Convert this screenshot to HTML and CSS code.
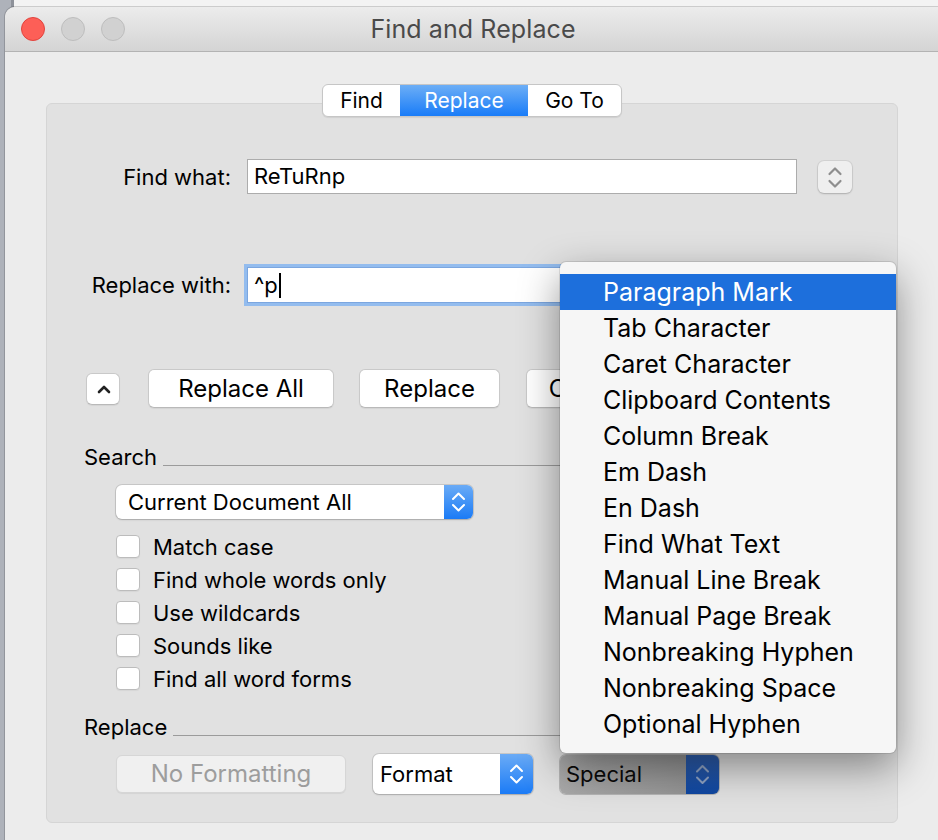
FILE: index.html
```html
<!DOCTYPE html>
<html>
<head>
<meta charset="utf-8">
<title>Find and Replace</title>
<link rel="stylesheet" href="styles.css">
</head>
<body>
<div class="window">
  <div class="titlebar">
    <div class="lights"><span class="light red"></span><span class="light"></span><span class="light"></span></div>
    <div class="title">Find and Replace</div>
    <div></div>
  </div>
  <div class="content">
    <div class="tabs">
      <div class="seg">
        <div class="tab t-find">Find</div>
        <div class="tab t-replace active">Replace</div>
        <div class="tab t-goto">Go To</div>
      </div>
    </div>
    <div class="group">
      <div class="row find-row">
        <div class="lbl">Find what:</div>
        <div class="input">ReTuRnp</div>
        <div class="stepper">
          <svg width="34" height="32" viewBox="0 0 34 32"><path d="M11.5 13 L17 7.5 L22.5 13 M11.5 20 L17 25.5 L22.5 20" fill="none" stroke="#8e8e8e" stroke-width="2.2" stroke-linecap="round" stroke-linejoin="round"/></svg>
        </div>
      </div>
      <div class="row replace-row">
        <div class="lbl">Replace with:</div>
        <div class="input focus">^p<span class="caret"></span></div>
        <div class="stepper">
          <svg width="34" height="32" viewBox="0 0 34 32"><path d="M11.5 13 L17 7.5 L22.5 13 M11.5 20 L17 25.5 L22.5 20" fill="none" stroke="#8e8e8e" stroke-width="2.2" stroke-linecap="round" stroke-linejoin="round"/></svg>
        </div>
      </div>
      <div class="row btn-row">
        <div class="btn btn-sq">
          <svg width="34" height="32" viewBox="0 0 34 32"><path d="M12 18 L17 13 L22 18" fill="none" stroke="#222" stroke-width="2.6" stroke-linecap="round" stroke-linejoin="round"/></svg>
        </div>
        <div class="btn btn-all">Replace All</div>
        <div class="btn btn-rep">Replace</div>
        <div class="btn btn-next">Cancel</div>
      </div>
      <div class="section-head search-head"><span>Search</span><div class="rule"></div></div>
      <div class="popup popup-doc">
        <span class="ptext">Current Document All</span>
        <div class="parrows">
          <svg width="29" height="34" viewBox="0 0 29 34"><path d="M9 14 L14.5 8.5 L20 14 M9 20 L14.5 25.5 L20 20" fill="none" stroke="#fff" stroke-width="2" stroke-linecap="round" stroke-linejoin="round"/></svg>
        </div>
      </div>
      <ul class="checks">
        <li><span class="cb"></span>Match case</li>
        <li><span class="cb"></span>Find whole words only</li>
        <li><span class="cb"></span>Use wildcards</li>
        <li><span class="cb"></span>Sounds like</li>
        <li><span class="cb"></span>Find all word forms</li>
      </ul>
      <div class="section-head replace-head"><span>Replace</span><div class="rule"></div></div>
      <div class="row bottom-row">
        <div class="btn btn-nofmt">No Formatting</div>
        <div class="popup popup-format">
          <span class="ptext">Format</span>
          <div class="parrows">
            <svg width="33" height="40" viewBox="0 0 33 40"><path d="M11 17 L16.5 11.5 L22 17 M11 23 L16.5 28.5 L22 23" fill="none" stroke="#fff" stroke-width="2" stroke-linecap="round" stroke-linejoin="round"/></svg>
          </div>
        </div>
        <div class="popup popup-special">
          <span class="ptext">Special</span>
          <div class="parrows">
            <svg width="33" height="39" viewBox="0 0 33 39"><path d="M11 16.5 L16.5 11 L22 16.5 M11 22.5 L16.5 28 L22 22.5" fill="none" stroke="#8fa3c4" stroke-width="2" stroke-linecap="round" stroke-linejoin="round"/></svg>
          </div>
        </div>
      </div>
    </div>
  </div>
  <ul class="menu">
    <li class="hl">Paragraph Mark</li>
    <li>Tab Character</li>
    <li>Caret Character</li>
    <li>Clipboard Contents</li>
    <li>Column Break</li>
    <li>Em Dash</li>
    <li>En Dash</li>
    <li>Find What Text</li>
    <li>Manual Line Break</li>
    <li>Manual Page Break</li>
    <li>Nonbreaking Hyphen</li>
    <li>Nonbreaking Space</li>
    <li>Optional Hyphen</li>
  </ul>
</div>
</body>
</html>
```

FILE: styles.css
```css
* { box-sizing: border-box; margin: 0; padding: 0; }
html, body { width: 938px; height: 840px; overflow: hidden; }
body {
  background: linear-gradient(to right, #aeb2ba 0 11px, #8e929a 11px 14px, #f3f3f3 14px);
  font-family: Inter, "Noto Sans", sans-serif;
  color: #000;
}
.window {
  position: relative;
  margin: 7px 0 0 5px;
  width: 940px;
  height: 840px;
  background: #ececec;
  border-radius: 10px 0 0 0;
  box-shadow: 0 0 0 1px rgba(0,0,0,0.16);
  overflow: hidden;
}
.titlebar {
  height: 45px;
  display: grid;
  grid-template-columns: 1fr auto 1fr;
  align-items: center;
  background: linear-gradient(#ececec, #d4d4d4);
  border-bottom: 1px solid #b3b3b3;
}
.lights { display: flex; gap: 16px; padding-left: 16px; }
.light {
  width: 24px; height: 24px; border-radius: 50%;
  background: #d1d1d1; border: 1px solid #bdbdbd;
}
.light.red { background: #fd5f57; border-color: #e0443e; }
.title { font-size: 25px; color: #4a4a4a; letter-spacing: 0.1px; margin-right: 4px; }

.content { padding: 32px 0 0 41px; width: 933px; }
.tabs { display: flex; justify-content: center; position: relative; z-index: 1; width: 852px; }
.seg {
  display: flex; height: 33px;
  background: #fff; border: 1px solid #c6c6c6; border-radius: 6px;
  box-shadow: 0 1px 1px rgba(0,0,0,0.08);
  overflow: hidden;
}
.tab { font-size: 21px; line-height: 32px; text-align: center; color: #000; }
.t-find { width: 77px; }
.t-replace { width: 128px; }
.t-goto { width: 93px; }
.tab.active { background: linear-gradient(#6caef6, #197cf8); color: #fff; }

.group {
  margin-top: -14px;
  width: 852px; height: 720px;
  background: #e1e1e1;
  border: 1px solid #d5d5d5;
  border-radius: 6px;
}
.row { display: flex; align-items: center; }
.lbl { width: 184px; margin-right: 16px; text-align: right; font-size: 22px; }
.input {
  width: 550px; height: 35px;
  background: #fff; border: 1px solid #acacac;
  font-size: 22px; line-height: 33px; padding-left: 6px;
  display: flex; align-items: center;
}
.input.focus {
  height: 36px;
  border-color: #7ba6df;
  box-shadow: 0 0 0 3px #93bcee;
}
.caret { display: inline-block; width: 2px; height: 25px; background: #000; margin-left: 1px; }
.stepper {
  margin-left: 21px; width: 34px; height: 32px;
  background: #efefef; border-radius: 6px;
  box-shadow: 0 0 0 1px rgba(0,0,0,0.06), 0 1px 2px rgba(0,0,0,0.18);
}
.stepper svg, .btn svg, .parrows svg { display: block; }
.find-row { margin-top: 55px; }
.replace-row { margin-top: 73px; }

.btn-row { margin-top: 66px; height: 39px; padding-left: 39px; }
.btn {
  height: 39px; background: #fff;
  border: 1px solid #c9c9c9; border-bottom-color: #b9b9b9;
  border-radius: 6px;
  box-shadow: 0 1px 1px rgba(0,0,0,0.06);
  font-size: 24px; line-height: 37px; text-align: center;
  white-space: nowrap; overflow: hidden;
}
.btn-sq { width: 34px; height: 32px; }
.btn-all { width: 186px; margin-left: 28px; }
.btn-rep { width: 141px; margin-left: 25px; }
.btn-next { width: 124px; margin-left: 26px; }

.section-head { display: flex; align-items: flex-end; padding-left: 37px; }
.section-head span { font-size: 22px; line-height: 24px; }
.section-head .rule { flex: 1; border-top: 1px solid #9b9b9b; margin: 0 17px 3px 6px; }
.search-head { margin-top: 37px; }
.replace-head { margin-top: 20px; }

.popup {
  display: flex; align-items: center;
  background: #fff; border-radius: 6px;
  box-shadow: 0 0 0 1px rgba(0,0,0,0.11), 0 1px 2px rgba(0,0,0,0.16);
  overflow: hidden;
}
.ptext { flex: 1; font-size: 22px; white-space: nowrap; }
.parrows { height: 100%; background: linear-gradient(#6aabf6, #1b7bf6); }
.popup-doc { margin: 16px 0 0 69px; width: 357px; height: 34px; }
.popup-doc .ptext { padding-left: 12px; }

.checks { list-style: none; margin: 11px 0 0 69px; }
.checks li { height: 33px; display: flex; align-items: center; font-size: 22px; }
.cb {
  width: 24px; height: 23px; margin-right: 13px;
  background: #fff; border: 1px solid #bcbcbc; border-radius: 4px;
  box-shadow: 0 1px 1px rgba(0,0,0,0.05);
}

.bottom-row { margin: 15px 0 0 69px; height: 40px; }
.btn-nofmt {
  width: 230px; height: 38px; line-height: 36px;
  background: #f0f0f0; border-color: #d6d6d6; color: #9d9d9d;
}
.popup-format { width: 160px; height: 40px; margin-left: 27px; }
.popup-format .ptext { padding-left: 7px; }
.popup-special {
  width: 159px; height: 39px; margin-left: 27px;
  background: linear-gradient(to right, #a9a9a9, #8f8f8f);
  box-shadow: 0 0 0 1px rgba(0,0,0,0.2);
}
.popup-special .ptext { padding-left: 6px; color: #0a0a0a; }
.popup-special .parrows { background: linear-gradient(#2f5fae, #0f47a1); }

.menu {
  position: absolute; left: 555px; top: 255px;
  width: 336px; height: 491px;
  list-style: none;
  background: #f6f6f6;
  border-radius: 6px;
  padding: 12px 0 11px;
  box-shadow: 0 0 0 1px rgba(0,0,0,0.1), 0 14px 40px rgba(0,0,0,0.42);
}
.menu li {
  height: 36px; line-height: 36px;
  padding-left: 43px;
  font-size: 25px; color: #000;
  white-space: nowrap;
}
.menu li.hl { background: #1d6fdc; color: #fff; }
```
